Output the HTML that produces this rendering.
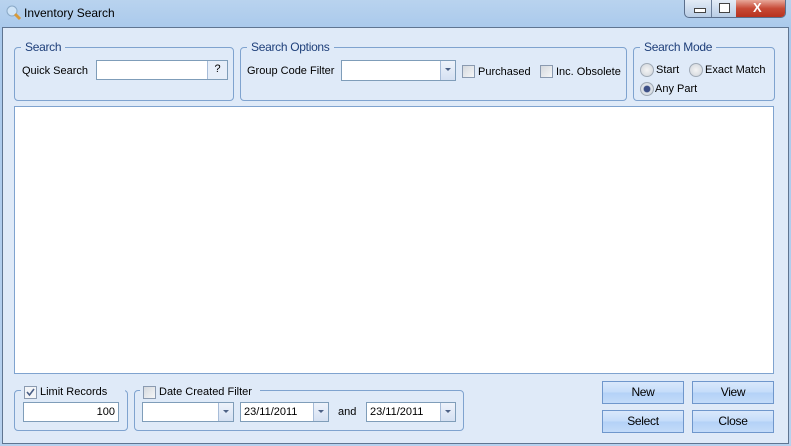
<!DOCTYPE html><html><head><style>
body{margin:0;width:791px;height:446px;overflow:hidden;font-family:"Liberation Sans",sans-serif;font-size:11px;color:#000;background:linear-gradient(#b9d3ee,#a9c9ec 30px,#b7d1ee)}
.a{position:absolute}
.g{position:absolute;border:1px solid #7fa3cf;border-radius:4px}
.gl{position:absolute;background:#dfeaf8;padding:0 4px;color:#1e3f7a;font-size:12px;letter-spacing:-0.3px}
.in{position:absolute;background:#fff;border:1px solid #7f9db9;box-sizing:border-box}
.ar{position:absolute;top:0;right:0;width:14px;height:100%;border-left:1px solid #a7bcd8;background:linear-gradient(#eef3fb,#d5e1f2)}
.ar:after{content:"";position:absolute;left:4px;top:7px;border:3px solid transparent;border-top:3px solid #4d6185}
.cb{position:absolute;width:11px;height:11px;border:1px solid #8a9ab0;background:linear-gradient(135deg,#d5d9de,#f5f6f7)}
.rb{position:absolute;width:12px;height:12px;border-radius:50%;border:1px solid #a0aab6;background:radial-gradient(#f4f4f4,#cfd4da)}
.bt{position:absolute;width:82px;height:23px;border:1px solid #6f97cc;box-sizing:border-box;background:linear-gradient(#d9e8fb,#c4dcfa 50%,#b3d1f7 50%,#c3dbf9);text-align:center;line-height:21px;font-size:12px;letter-spacing:-0.3px}
</style></head><body>
<div class="a" style="left:6px;top:5px;width:14px;height:14px"><svg width="16" height="16"><circle cx="6" cy="6" r="5" fill="#cfe4f7" stroke="#8aa9c7"/><line x1="9" y1="9" x2="14" y2="14" stroke="#d89a3a" stroke-width="3"/></svg></div>
<div class="a" style="left:24px;top:6px;font-size:12px">Inventory Search</div>
<div class="a" style="left:684px;top:0;width:100px;height:17px;border:1px solid #5b6f8c;border-top:0;border-radius:0 0 5px 5px;overflow:hidden;background:linear-gradient(#e3ecf7,#b9cde6)">
<div class="a" style="left:26px;top:0;width:1px;height:17px;background:#6a7d98"></div>
<div class="a" style="left:51px;top:0;width:49px;height:17px;background:linear-gradient(#e8a89a,#c74a36 50%,#b8321f)"></div>
<div class="a" style="left:9px;top:8px;width:10px;height:3px;border:1px solid #444;background:#fff"></div>
<div class="a" style="left:34px;top:3px;width:9px;height:8px;border:1px solid #444;background:#fff"></div>
<div class="a" style="left:68px;top:0;color:#fff;font-weight:bold;font-size:13px">X</div></div>
<div class="a" style="left:2px;top:27px;width:785px;height:415px;background:#dfeaf8;border:1px solid #5f7591"></div>
<div class="g" style="left:14px;top:47px;width:218px;height:52px"></div><div class="gl" style="left:21px;top:40px">Search</div>
<div class="a" style="left:22px;top:65px">Quick Search</div>
<div class="in" style="left:96px;top:60px;width:132px;height:20px"><div class="a" style="right:0;top:0;width:19px;height:18px;border-left:1px solid #a7bcd8;background:#e6eef9;text-align:center;line-height:17px">?</div></div>
<div class="g" style="left:240px;top:47px;width:385px;height:52px"></div><div class="gl" style="left:247px;top:40px">Search Options</div>
<div class="a" style="left:247px;top:65px">Group Code Filter</div>
<div class="in" style="left:341px;top:60px;width:115px;height:21px"><div class="ar"></div></div>
<div class="cb" style="left:462px;top:65px"></div><div class="a" style="left:478px;top:66px">Purchased</div>
<div class="cb" style="left:540px;top:65px"></div><div class="a" style="left:556px;top:66px">Inc. Obsolete</div>
<div class="g" style="left:633px;top:47px;width:140px;height:52px"></div><div class="gl" style="left:640px;top:40px">Search Mode</div>
<div class="rb" style="left:640px;top:63px"></div><div class="a" style="left:656px;top:64px">Start</div>
<div class="rb" style="left:689px;top:63px"></div><div class="a" style="left:705px;top:64px">Exact Match</div>
<div class="rb" style="left:640px;top:82px;background:radial-gradient(#3c4f86 35%,#dfe4ea 45%,#cfd4da)"></div><div class="a" style="left:655px;top:83px">Any Part</div>
<div class="a" style="left:14px;top:106px;width:758px;height:266px;background:#fff;border:1px solid #7fa3cf"></div>
<div class="g" style="left:14px;top:390px;width:112px;height:39px"></div><div class="gl" style="left:21px;top:384px;width:96px;height:14px"></div>
<div class="cb" style="left:24px;top:386px;background:#f3f5f8"><svg class="a" width="11" height="11"><path d="M2 5l2.5 3L9 2" stroke="#4a5f86" stroke-width="1.6" fill="none"/></svg></div><div class="a" style="left:40px;top:386px">Limit Records</div>
<div class="in" style="left:23px;top:402px;width:96px;height:20px;text-align:right;padding:3px 3px 0 0">100</div>
<div class="g" style="left:134px;top:390px;width:328px;height:39px"></div><div class="gl" style="left:140px;top:384px;width:112px;height:14px"></div>
<div class="cb" style="left:143px;top:386px"></div><div class="a" style="left:159px;top:386px">Date Created Filter</div>
<div class="in" style="left:142px;top:402px;width:92px;height:20px"><div class="ar"></div></div>
<div class="in" style="left:240px;top:402px;width:89px;height:20px;padding:3px 0 0 3px">23/11/2011<div class="ar"></div></div>
<div class="a" style="left:338px;top:406px">and</div>
<div class="in" style="left:366px;top:402px;width:90px;height:20px;padding:3px 0 0 3px">23/11/2011<div class="ar"></div></div>
<div class="bt" style="left:602px;top:381px">New</div><div class="bt" style="left:692px;top:381px">View</div>
<div class="bt" style="left:602px;top:410px">Select</div><div class="bt" style="left:692px;top:410px">Close</div>
</body></html>
